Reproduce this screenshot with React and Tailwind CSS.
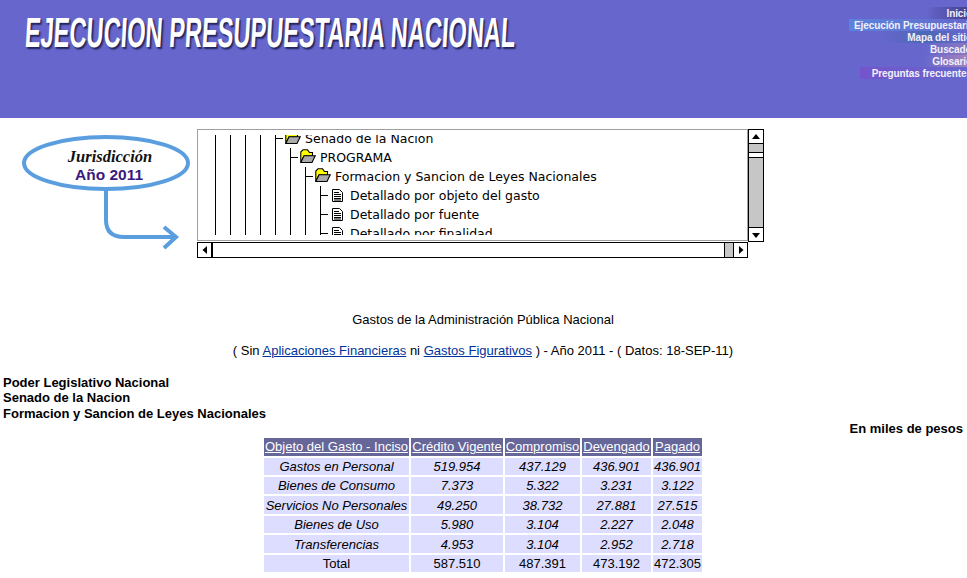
const NAV = [
  { t: "Inicio", c: "w-[41px] bg-gradient-to-r from-[#6666cc] to-[#46428f]" },
  { t: "Ejecución Presupuestaria", c: "w-[118px] bg-gradient-to-r from-[#5b82dc] via-[#5f78d4] to-[#6666cc]" },
  { t: "Mapa del sitio", c: "w-[84px] bg-gradient-to-r from-[#6666cc] via-[#4a68b4] to-[#6666cc]" },
  { t: "Buscador", c: "w-[42px] bg-gradient-to-r from-[#6666cc] to-[#8a78c0]" },
  { t: "Glosario", c: "w-[44px] bg-gradient-to-r from-[#6666cc] to-[#a582bc]" },
  { t: "Preguntas frecuentes", c: "w-[107px] bg-gradient-to-r from-[#7454cc] to-[#6666cc]" },
];

function Guides({ n }) {
  return Array.from({ length: n }).map((_, i) => (
    <span key={i} className="w-[15px] h-full border-l border-black shrink-0" />
  ));
}

function Tick() {
  return (
    <svg width="10" height="19" className="shrink-0">
      <path d="M0.5 0V19M0.5 9.5H8" stroke="#000" fill="none" />
    </svg>
  );
}

function Folder() {
  return (
    <svg width="16" height="15" viewBox="0 0 16 15" className="shrink-0 mr-[4px] -translate-y-px">
      <path d="M0.8 13.5V3L3 0.8H7.5L9.5 3.5H12.5V7H4L0.8 13.5Z" fill="#ffff00" stroke="#000" strokeWidth="1.1" />
      <path d="M0.8 13.5L4 6.8H15.2L12 13.5Z" fill="#aaaaaa" stroke="#000" strokeWidth="1.1" />
    </svg>
  );
}

function Doc() {
  return (
    <svg width="13" height="15" viewBox="0 0 13 15" className="shrink-0 ml-px mr-[6px]">
      <path d="M1.5 1.5H8.5L11.5 4.5V13.5H1.5Z" fill="#fff" stroke="#000" />
      <path d="M3 4.5H8M3 6.5H10M3 8.5H10M3 10.5H10M3 12H10" stroke="#000" fill="none" />
    </svg>
  );
}

function TreeRow({ depth, icon, text }) {
  return (
    <div className="flex items-center h-[19px] whitespace-nowrap">
      <Guides n={depth} />
      <Tick />
      {icon === "folder" ? <Folder /> : <Doc />}
      <span>{text}</span>
    </div>
  );
}

function ScrollBtn({ dir, className }) {
  const p = {
    up: "M7 4L11 9H3Z",
    down: "M3 5H11L7 10Z",
    left: "M4.5 7L9 3V11Z",
    right: "M9.5 7L5 3V11Z",
  }[dir];
  return (
    <div className={"bg-white border-black shrink-0 " + className}>
      <svg width="14" height="14" viewBox="0 0 14 14">
        <path d={p} fill="#000" />
      </svg>
    </div>
  );
}

const ROWS = [
  ["Gastos en Personal", "519.954", "437.129", "436.901", "436.901", "h-[17px] [&>td]:pb-px"],
  ["Bienes de Consumo", "7.373", "5.322", "3.231", "3.122", "h-[17px] [&>td]:pb-px"],
  ["Servicios No Personales", "49.250", "38.732", "27.881", "27.515", "h-[18px]"],
  ["Bienes de Uso", "5.980", "3.104", "2.227", "2.048", "h-[17px]"],
  ["Transferencias", "4.953", "3.104", "2.952", "2.718", "h-[18px]"],
];

export default function App() {
  return (
    <div className="w-[967px] h-[578px] overflow-hidden bg-white text-black text-[13px] leading-[15px] font-['Liberation_Sans',Arial,sans-serif]">
      <header className="h-[118px] bg-[#6666cc] flex justify-between overflow-hidden">
        <h1 className="ml-[25px] mt-[11px] w-[490px] shrink-0 h-[44px] text-[42px] leading-[44px] font-bold text-white whitespace-nowrap font-['Liberation_Sans',sans-serif] origin-left scale-x-[0.562] -skew-x-6 [text-shadow:3px_2px_2px_#23235a]">
          EJECUCION PRESUPUESTARIA NACIONAL
        </h1>
        <nav className="mt-[7px] flex flex-col items-end text-[10px] leading-[12px] font-bold text-[#f2f0fa] tracking-[-0.1px]">
          {NAV.map((n) => (
            <div key={n.t} className={"h-[12px] text-right whitespace-nowrap " + n.c}>
              <span className="inline-block w-full translate-x-[5px] translate-y-px">{n.t}</span>
            </div>
          ))}
        </nav>
      </header>

      <section className="flex mt-[11px]">
        <div className="w-[197px] shrink-0">
          <svg width="197" height="130" viewBox="0 0 197 130">
            <ellipse cx="106" cy="34" rx="82" ry="26" fill="#fff" stroke="#5a9ee0" strokeWidth="4" />
            <path d="M106 61V91Q106 108 124 108H175M164 98L176 108L164 119" fill="none" stroke="#5a9ee0" strokeWidth="4" />
            <text x="110" y="33" textAnchor="middle" fontFamily="Liberation Serif, serif" fontStyle="italic" fontWeight="700" fontSize="16.5" fill="#111">Jurisdicción</text>
            <text x="109" y="51" textAnchor="middle" fontFamily="Liberation Sans, sans-serif" fontWeight="700" fontSize="15.5" fill="#3b1a80">Año 2011</text>
          </svg>
        </div>
        <div className="flex w-[567px] shrink-0">
          <div className="w-[551px] shrink-0">
            <div className="h-[112px] border border-[#a0a0a0] pt-[5px] pb-[5px] pl-[17px] overflow-hidden">
              <div className="h-[100px] overflow-hidden font-['DejaVu_Sans',sans-serif] text-[12.5px] leading-[19px]">
                <div className="-mt-[6px]">
                  <TreeRow depth={4} icon="folder" text="Senado de la Nacion" />
                  <TreeRow depth={5} icon="folder" text="PROGRAMA" />
                  <TreeRow depth={6} icon="folder" text="Formacion y Sancion de Leyes Nacionales" />
                  <TreeRow depth={7} icon="doc" text="Detallado por objeto del gasto" />
                  <TreeRow depth={7} icon="doc" text="Detallado por fuente" />
                  <TreeRow depth={7} icon="doc" text="Detallado por finalidad" />
                </div>
              </div>
            </div>
            <div className="mt-[1px] h-[16px] border border-black flex bg-white">
              <ScrollBtn dir="left" className="w-[15px] border-r-2" />
              <div className="flex-1" />
              <div className="w-[10px] bg-[#c6c6c6] border-x border-black" />
              <ScrollBtn dir="right" className="w-[13px] border-l-0" />
            </div>
          </div>
          <div className="w-[16px] h-[113px] border border-black flex flex-col bg-[#c6c6c6]">
            <ScrollBtn dir="up" className="h-[14px] border-b" />
            <div className="h-[8px]" />
            <div className="h-[6px] bg-white border-y border-black" />
            <div className="flex-1" />
            <ScrollBtn dir="down" className="h-[14px] border-t" />
          </div>
        </div>
      </section>

      <p className="mt-[53px] text-center pr-px">Gastos de la Administración Pública Nacional</p>
      <p className="mt-[16px] text-center pr-px">
        ( Sin <a className="text-[#003399] underline">Aplicaciones Financieras</a> ni{" "}
        <a className="text-[#003399] underline">Gastos Figurativos</a> ) - Año 2011 - ( Datos: 18-SEP-11)
      </p>

      <div className="mt-[17px] ml-[3px] font-bold">
        <div className="h-[15px]">Poder Legislativo Nacional</div>
        <div className="h-[16px]">Senado de la Nacion</div>
        <div className="h-[15px]">Formacion y Sancion de Leyes Nacionales</div>
      </div>
      <div className="pr-[4px] text-right font-bold">En miles de pesos</div>

      <table className="ml-[262px] table-fixed w-[442px] border-separate border-spacing-[2px] text-center">
        <colgroup>
          <col className="w-[145px]" />
          <col className="w-[92px]" />
          <col className="w-[75px]" />
          <col className="w-[69px]" />
          <col className="w-[49px]" />
        </colgroup>
        <thead>
          <tr className="h-[18px] bg-[#666699] text-white underline">
            <th className="p-0 pb-px font-normal whitespace-nowrap">Objeto del Gasto - Inciso</th>
            <th className="p-0 pb-px font-normal whitespace-nowrap">Crédito Vigente</th>
            <th className="p-0 pb-px font-normal whitespace-nowrap">Compromiso</th>
            <th className="p-0 pb-px font-normal whitespace-nowrap">Devengado</th>
            <th className="p-0 pb-px font-normal whitespace-nowrap">Pagado</th>
          </tr>
        </thead>
        <tbody>
          {ROWS.map((r) => (
            <tr key={r[0]} className={"bg-[#ddddff] italic " + r[5]}>
              {r.slice(0, 5).map((c, i) => (
                <td key={i} className="p-0 whitespace-nowrap">{c}</td>
              ))}
            </tr>
          ))}
          <tr className="bg-[#ddddff] h-[17px]">
            {["Total", "587.510", "487.391", "473.192", "472.305"].map((c) => (
              <td key={c} className="p-0 pb-px whitespace-nowrap">{c}</td>
            ))}
          </tr>
        </tbody>
      </table>
    </div>
  );
}
